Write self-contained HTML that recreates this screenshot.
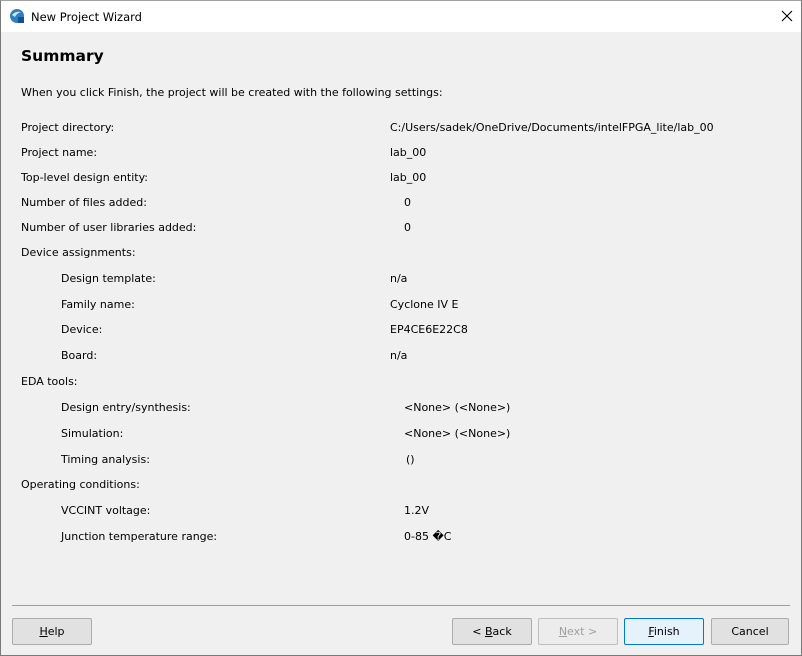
<!DOCTYPE html>
<html><head><meta charset="utf-8"><style>
*{margin:0;padding:0;box-sizing:border-box}
body{width:802px;height:656px;overflow:hidden;background:#f0f0f0;font-family:"DejaVu Sans","Liberation Sans",sans-serif;font-size:11px;color:#000;position:relative}
.win{position:absolute;left:0;top:0;width:802px;height:656px;border:1px solid #7a7a7a;border-top:1px solid #a0a0a0;background:#f0f0f0}
.title{position:absolute;left:0;top:0;width:800px;height:31px;background:#fff}
.t{position:absolute;white-space:nowrap;line-height:14px}
.btn{position:absolute;top:617px;height:27px;border:1px solid #adadad;background:#e1e1e1;border-radius:2px;text-align:center;line-height:25px;font-size:11px}
u{text-decoration:underline}
</style></head><body><div class="win">
<div class="title">
<svg style="position:absolute;left:8px;top:7px" width="16" height="16" viewBox="0 0 16 16"><circle cx="8" cy="8" r="7" fill="#2f7fc0"/><path d="M3 7 Q6 3 12 4 Q8 5 6 9 Z" fill="#cfe6f7"/><rect x="9" y="9" width="6" height="6" fill="#1a4f8a"/></svg>
<div class="t" style="left:30px;top:9px;font-size:11.5px">New Project Wizard</div>
<svg style="position:absolute;left:780px;top:9px" width="12" height="12"><path d="M1 1L11 11M11 1L1 11" stroke="#000" stroke-width="1.1"/></svg>
</div>
<div class="t" style="left:20px;top:46px;font-size:15.5px;font-weight:bold;line-height:18px">Summary</div>
<div class="t" style="left:20px;top:85px">When you click Finish, the project will be created with the following settings:</div>
<div class="t" style="left:20px;top:120px">Project directory:</div><div class="t" style="left:389px;top:120px">C:/Users/sadek/OneDrive/Documents/intelFPGA_lite/lab_00</div>
<div class="t" style="left:20px;top:145px">Project name:</div><div class="t" style="left:389px;top:145px">lab_00</div>
<div class="t" style="left:20px;top:170px">Top-level design entity:</div><div class="t" style="left:389px;top:170px">lab_00</div>
<div class="t" style="left:20px;top:195px">Number of files added:</div><div class="t" style="left:403px;top:195px">0</div>
<div class="t" style="left:20px;top:220px">Number of user libraries added:</div><div class="t" style="left:403px;top:220px">0</div>
<div class="t" style="left:20px;top:245px">Device assignments:</div>
<div class="t" style="left:60px;top:271px">Design template:</div><div class="t" style="left:389px;top:271px">n/a</div>
<div class="t" style="left:60px;top:297px">Family name:</div><div class="t" style="left:389px;top:297px">Cyclone IV E</div>
<div class="t" style="left:60px;top:322px">Device:</div><div class="t" style="left:389px;top:322px">EP4CE6E22C8</div>
<div class="t" style="left:60px;top:348px">Board:</div><div class="t" style="left:389px;top:348px">n/a</div>
<div class="t" style="left:20px;top:374px">EDA tools:</div>
<div class="t" style="left:60px;top:400px">Design entry/synthesis:</div><div class="t" style="left:403px;top:400px">&lt;None&gt; (&lt;None&gt;)</div>
<div class="t" style="left:60px;top:426px">Simulation:</div><div class="t" style="left:403px;top:426px">&lt;None&gt; (&lt;None&gt;)</div>
<div class="t" style="left:60px;top:452px">Timing analysis:</div><div class="t" style="left:405px;top:452px">()</div>
<div class="t" style="left:20px;top:477px">Operating conditions:</div>
<div class="t" style="left:60px;top:503px">VCCINT voltage:</div><div class="t" style="left:403px;top:503px">1.2V</div>
<div class="t" style="left:60px;top:529px">Junction temperature range:</div><div class="t" style="left:403px;top:529px">0-85 �C</div>
<div style="position:absolute;left:11px;top:604px;width:778px;height:1px;background:#a0a0a0"></div>
<div class="btn" style="left:11px;width:80px"><u>H</u>elp</div>
<div class="btn" style="left:451px;width:80px">&lt; <u>B</u>ack</div>
<div class="btn" style="left:537px;width:80px;color:#a0a0a0;border-color:#bfbfbf;background:#ececec"><u>N</u>ext &gt;</div>
<div class="btn" style="left:623px;width:80px;border-color:#0078d7;background:#e5f1fb"><u>F</u>inish</div>
<div class="btn" style="left:710px;width:78px">Cancel</div>
</div></body></html>
